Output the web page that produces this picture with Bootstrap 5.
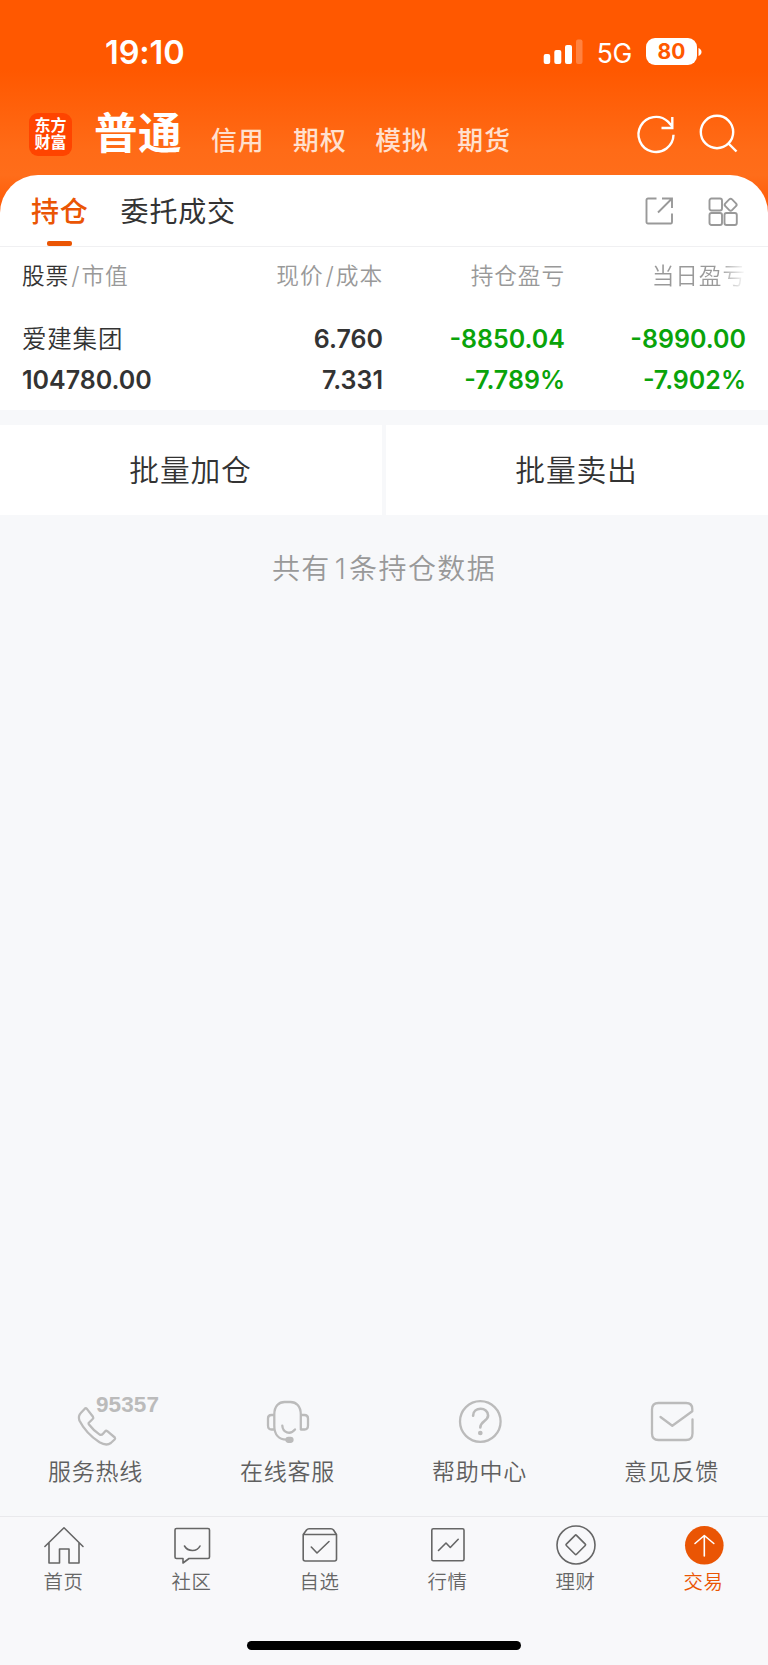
<!DOCTYPE html>
<html lang="zh-CN">
<head>
<meta charset="utf-8">
<meta name="viewport" content="width=device-width, initial-scale=1">
<title>交易</title>
<link href="https://cdn.jsdelivr.net/npm/bootstrap@5.3.0/dist/css/bootstrap.min.css" rel="stylesheet">
<style>
:root{--brand:#ea5504;--ink:#333;--muted:#999}
body{font-family:"Inter","Noto Sans CJK SC",sans-serif;background:#f7f8fa;color:var(--ink);line-height:1;overflow:hidden}
svg{display:block;fill:none;flex:none;overflow:visible}
.screen{width:768px;height:1665px}
.hero{height:215px;background:linear-gradient(#ff5800 70px,#ff6b17 150px,#ff6d1a 175px,#ff5a05 210px);color:#fff}
.status{height:100px;padding:3px 66px 0 105px}
.clock{font-size:32.5px;font-weight:600;letter-spacing:-.1px;padding-top:3px}
.net{font-size:26.5px;font-weight:400;letter-spacing:-.3px;margin:3px 14px 0 14px}
.batt{width:51px;height:27px;border-radius:9px;background:#fff;color:#ff5800;font-size:21px;font-weight:700;line-height:28px}
.accounts{height:75px;padding:0 31px 0 29px}
.logo{width:43px;height:43px;border-radius:9px;background:#ff4400;font-size:16px;font-weight:700;line-height:17px;padding:4px 0 0 5.5px;margin-top:13px}
.acct-main{font-size:43.5px;font-weight:700;line-height:50px;letter-spacing:.5px;margin:8px 0 0 22px}
.acct{font-size:25.8px;font-weight:500;line-height:30px;letter-spacing:1px;margin-top:26px;color:#ffe0cf}
.sheet{margin-top:-40px;border-radius:38px 38px 0 0;height:235px}
.tabs{height:72px;border-bottom:1px solid #f0f0f2;padding:0 30px 0 31px}
.tab-on,.tab-off{font-size:28px;line-height:74px;letter-spacing:.8px}
.tab-on{color:var(--brand);font-weight:500;height:71px}
.tab-on::after{content:"";position:absolute;left:16px;bottom:0;width:25px;height:5px;border-radius:2px;background:var(--brand)}
.tab-off{margin-left:32px}
.holdings{display:grid;grid-template-columns:161px 200px 182px 181px;padding:0 22px 0 22px}
.hd{font-size:22.7px;line-height:58px;letter-spacing:.9px;color:var(--muted);font-weight:350}
.sl{margin:0 1px 0 2px;font-weight:300;font-size:24px}
.name{font-size:24.5px;line-height:30px;letter-spacing:.8px;font-weight:350;margin-top:19px;height:30px}
.num{font-size:25px;line-height:30px;font-weight:600;margin-top:19px}
.num2{margin-top:10.5px}
.down{color:#0aa30a}
.fade-out{background:linear-gradient(90deg,#999 0 calc(100% - 27px),#fff 100%);-webkit-background-clip:text;background-clip:text;color:transparent}
.bulk{margin-top:15px;gap:4px;height:90px}
.bulk>div{font-size:29.8px;letter-spacing:.8px;font-weight:350;padding:1px 1px 0 0}
.total{font-size:28px;letter-spacing:1.4px;font-weight:350;color:var(--muted);line-height:40px;margin-top:34px}
.total span{margin:0 2px 0 4px}
.service{height:128px;color:#5f5f5f;font-size:23px;letter-spacing:.7px;font-weight:350}
.service svg{stroke:#bbb;stroke-width:2.3;stroke-linecap:round;stroke-linejoin:round}
.service .cap{line-height:30px;margin-top:13px;padding-right:1px}
.hotline{left:96px;top:5px;font-family:"Liberation Sans",sans-serif;font-size:22.5px;font-weight:700;color:#bbb;letter-spacing:.1px;line-height:24px}
.dock{height:149px;background:#f8f8fa;border-top:1px solid #e9e9ec;color:#666;font-size:19.4px;letter-spacing:.7px;font-weight:350}
.dock svg{stroke:#666;stroke-width:1.6;stroke-linecap:round;stroke-linejoin:round;margin-top:8px}
.dock .cap{line-height:26px;margin-top:4px;padding-right:1px}
.dock .now{color:var(--brand)}
.homebar{left:247px;bottom:15px;width:274px;height:9px;border-radius:5px;background:#000}
</style>
</head>
<body>
<main class="screen d-flex flex-column">
  <header class="hero flex-shrink-0">
    <div class="status d-flex align-items-center">
      <span class="clock">19:10</span>
      <svg class="ms-auto" width="40" height="25" viewBox="0 0 40 25"><g fill="#fff"><rect x="0.7" y="15" width="6.5" height="10" rx="2"/><rect x="11.3" y="11" width="7" height="14" rx="2"/><rect x="22" y="6" width="7" height="19" rx="2"/><rect x="33" y="0.5" width="6.5" height="24.500" rx="2" opacity=".25"/></g></svg>
      <span class="net">5G</span>
      <span class="batt text-center">80</span>
      <svg width="5" height="10" viewBox="0 0 5 10"><path d="M1.500 1C5.500 2.500 5.500 7.500 1.500 9Z" fill="#fff"/></svg>
    </div>
    <div class="accounts d-flex align-items-start">
      <div class="logo">东方<br>财富</div>
      <span class="acct-main">普通</span>
      <span class="acct" style="margin-left:29px">信用</span>
      <span class="acct" style="margin-left:28.5px">期权</span>
      <span class="acct" style="margin-left:28.5px">模拟</span>
      <span class="acct" style="margin-left:28.5px">期货</span>
      <svg class="ms-auto" style="margin-top:14px" width="38" height="40" viewBox="0 0 38 40" stroke="#fff" stroke-width="2.4"><path d="M36.500 20.800A17.500 17.500 0 1 1 31 7.700L35.300 12.500M35.300 3v11H24.500"/></svg>
      <svg style="margin:14px 0 0 24px" width="38" height="40" viewBox="0 0 38 40" stroke="#fff" stroke-width="2.4"><circle cx="18" cy="18" r="16.200"/><path d="M29.500 29.500l8 8"/></svg>
    </div>
  </header>

  <section class="sheet bg-white flex-shrink-0">
    <div class="tabs d-flex">
      <div class="tab-on position-relative">持仓</div>
      <div class="tab-off">委托成交</div>
      <svg class="ms-auto" style="margin-top:22px" width="28" height="28" viewBox="0 0 28 28" stroke="#999" stroke-width="1.900"><path d="M11.500 1.500H3A1.500 1.500 0 0 0 1.500 3v22A1.500 1.500 0 0 0 3 26.500h23a1.300 1.300 0 0 0 1-1.500v-8.500M17 1.500h10V11M27 1.500L13 15.500"/></svg>
      <svg style="margin:22px 0 0 35px" width="30" height="30" viewBox="0 0 30 30" stroke="#999" stroke-width="1.900"><rect x="1.500" y="1.500" width="12.500" height="12" rx="2"/><rect x="1.500" y="16" width="12.500" height="12" rx="2"/><rect x="16.500" y="16" width="12.300" height="12" rx="2"/><rect x="17.900" y="3" width="9.500" height="9.500" rx="2" transform="rotate(45 22.650 7.750)"/></svg>
    </div>
    <div class="holdings text-nowrap">
      <div class="hd"><span style="color:#333">股票</span><span class="sl">/</span>市值</div>
      <div class="hd text-end">现价<span class="sl">/</span>成本</div>
      <div class="hd text-end">持仓盈亏</div>
      <div class="hd text-end"><span class="fade-out">当日盈亏</span></div>
      <div class="name">爱建集团</div>
      <div class="num text-end">6.760</div>
      <div class="num text-end down">-8850.04</div>
      <div class="num text-end down">-8990.00</div>
      <div class="num num2">104780.00</div>
      <div class="num num2 text-end">7.331</div>
      <div class="num num2 text-end down">-7.789%</div>
      <div class="num num2 text-end down">-7.902%</div>
    </div>
  </section>

  <div class="bulk d-flex flex-shrink-0">
    <div class="bg-white w-50 d-flex align-items-center justify-content-center">批量加仓</div>
    <div class="bg-white w-50 d-flex align-items-center justify-content-center">批量卖出</div>
  </div>
  <div class="total text-center">共有<span>1</span>条持仓数据</div>

  <section class="service d-flex mt-auto flex-shrink-0 text-center">
    <div class="w-25 position-relative">
      <svg class="mx-auto" width="46" height="56" viewBox="0 0 46 56"><path d="M11.800 20.700Q12.800 19.800 13.900 20.900L20 28.800Q20.800 30 19.700 31L15.600 35Q15.400 35.600 16 36.500Q20.500 42.500 26.700 46.600Q28.700 47.300 30 45.700L32 43.400Q33 42.300 34.300 43.200L41.800 49.500Q42.500 50.600 41.600 51.500L37.800 55Q33.500 58.300 26.500 54.300Q13 45.500 6.400 32.500Q4.800 28 8 24.700Z"/></svg>
      <span class="hotline position-absolute">95357</span>
      <div class="cap">服务热线</div>
    </div>
    <div class="w-25">
      <svg class="mx-auto" width="46" height="56" viewBox="0 0 46 56"><path d="M9.300 27V26.500C9.300 18 14 14 19.500 14h6C31 14 35.800 18 35.800 26.500V41.500M9.300 27V38C9.300 46.500 14 51.500 21.500 51.700M9.300 27H6.500Q3 27 3 30.500v7Q3 41.500 6.500 41.500H9.300M35.800 27h3.500Q43 27 43 30.500v7Q43 41.500 39.500 41.500H35.800M17.300 37.700C17.800 44.500 25 47.500 30 41.500"/><rect x="21.500" y="49.800" width="6" height="4" rx="2" fill="#bbb"/></svg>
      <div class="cap">在线客服</div>
    </div>
    <div class="w-25">
      <svg class="mx-auto" width="46" height="56" viewBox="0 0 46 56"><circle cx="23.300" cy="33.500" r="20.300"/><path d="M16.100 27.800C16.100 18.500 31.100 18.500 31.100 27.500C31.100 33 23.300 33 23.300 39.500" stroke-width="2.600"/><circle cx="23.300" cy="45" r="1.200" fill="#bbb"/></svg>
      <div class="cap">帮助中心</div>
    </div>
    <div class="w-25">
      <svg class="mx-auto" width="46" height="56" viewBox="0 0 46 56"><path d="M11.500 29L23.300 37.700L43.300 23.200V21Q43.300 15 37 15H9.500Q3 15 3 21.500V45.500Q3 52 9.500 52H37Q43.500 52 43.500 45.500V31.500"/></svg>
      <div class="cap">意见反馈</div>
    </div>
  </section>

  <nav class="dock position-relative d-flex flex-shrink-0 text-center">
    <div class="flex-fill">
      <svg class="mx-auto" width="40" height="40" viewBox="0 0 40 40"><path d="M.900 21.500L20 2.800L39 21.500M5 18V38H15.500V24H25V38H35V18"/></svg>
      <div class="cap">首页</div>
    </div>
    <div class="flex-fill">
      <svg class="mx-auto" width="40" height="40" viewBox="0 0 40 40"><path d="M4.500 3.500H36Q37.500 3.500 37.500 5V32Q37.500 33.500 36 33.500H17L11 38V33.500H4.500Q3 33.500 3 32V5Q3 3.500 4.500 3.500ZM12.500 21C16 27 25 27 28 21"/></svg>
      <div class="cap">社区</div>
    </div>
    <div class="flex-fill">
      <svg class="mx-auto" width="40" height="40" viewBox="0 0 40 40"><path d="M3.200 9.500L6.500 5Q7.500 3.700 9 3.700H31Q32.500 3.700 33.500 5L36.500 9.500M3.200 9.500H36.500V34Q36.500 36 34.500 36H5.200Q3.200 36 3.200 34ZM11.300 22L17 28L29 16.500"/></svg>
      <div class="cap">自选</div>
    </div>
    <div class="flex-fill">
      <svg class="mx-auto" width="40" height="40" viewBox="0 0 40 40"><rect x="3.800" y="3.800" width="32.200" height="32" rx="1.500"/><path d="M10.500 25.500L18 18L22.300 22.500L30.200 14.300"/></svg>
      <div class="cap">行情</div>
    </div>
    <div class="flex-fill">
      <svg class="mx-auto" width="40" height="40" viewBox="0 0 40 40"><circle cx="20" cy="20" r="19"/><rect x="12.600" y="12.600" width="14.400" height="14.400" rx="1" transform="rotate(45 19.800 19.800)"/></svg>
      <div class="cap">理财</div>
    </div>
    <div class="flex-fill now">
      <svg class="mx-auto" width="40" height="40" viewBox="0 0 40 40"><circle cx="20.300" cy="20.300" r="19.300" fill="#ea5504" stroke="none"/><path d="M20.300 31V10.500M11 18.500L20.300 10.500L29.800 18.500" stroke="#fff"/></svg>
      <div class="cap">交易</div>
    </div>
    <div class="homebar position-absolute"></div>
  </nav>
</main>
<script src="https://cdn.jsdelivr.net/npm/bootstrap@5.3.0/dist/js/bootstrap.bundle.min.js"></script>
</body>
</html>
